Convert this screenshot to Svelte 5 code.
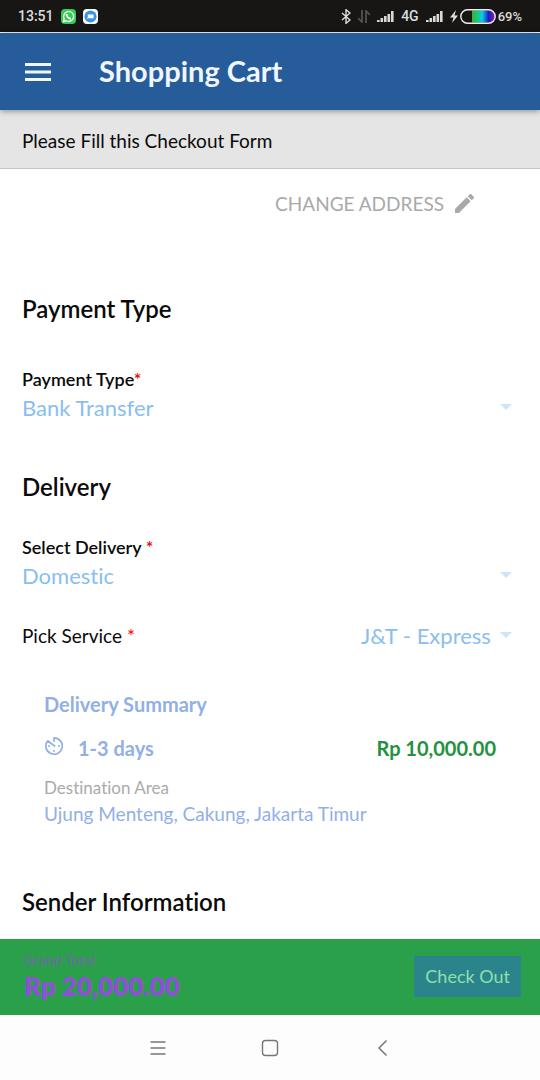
<script lang="ts">
	let payment = $state('Bank Transfer');
	let delivery = $state('Domestic');
	let service = $state('J&T - Express');

	const bars = [2, 4, 6, 8, 11];
</script>

{#snippet signal()}
	<svg viewBox="0 0 17 12" width="17" height="12" aria-hidden="true">
		{#each bars as height, i}
			<rect x={i * 3.5} y={12 - height} width="2.6" {height} fill="#d8d8d8" />
		{/each}
	</svg>
{/snippet}

{#snippet caret()}
	<svg class="caret" viewBox="0 0 12 6" width="12" height="6" aria-hidden="true">
		<path d="M0 0h12L6 6z" fill="#cfe4f7" />
	</svg>
{/snippet}

<div class="screen">
	<div class="status">
		<div class="status__group">
			<span>13:51</span>
			<svg viewBox="0 0 15 15" width="15" height="15" aria-hidden="true">
				<rect width="15" height="15" rx="4" fill="#35cc55" />
				<path
					d="M2.4 12.7l.9-2.8a5 5 0 1 1 1.9 1.9z"
					fill="none"
					stroke="#fff"
					stroke-width="1.3"
				/>
				<path d="M5.5 5q.2 4 4.5 4.8" fill="none" stroke="#fff" stroke-width="1.7" />
			</svg>
			<svg viewBox="0 0 15 15" width="15" height="15" aria-hidden="true">
				<rect width="15" height="15" rx="4" fill="#fff" />
				<circle cx="7.5" cy="7.5" r="6.1" fill="#3b93e4" />
				<path d="M4.8 5.6h5.8v3.6H5.400l-1.400.8.8-2z" fill="#fff" />
			</svg>
		</div>
		<div class="status__group">
			<svg viewBox="0 0 10 15" width="10" height="15" aria-hidden="true">
				<path d="M1 4l8 7-4 3.3V.7L9 4l-8 7" fill="none" stroke="#ddd" stroke-width="1.4" />
			</svg>
			<svg viewBox="0 0 12 13" width="12" height="13" aria-hidden="true">
				<path d="M4 0v12L0 8M8 13V1l4 4" fill="none" stroke="#555" stroke-width="1.7" />
			</svg>
			{@render signal()}
			<span>4G</span>
			{@render signal()}
			<div class="battery">
				<svg viewBox="0 0 8 13" width="8" height="13" aria-hidden="true">
					<path d="M6 0L0 7.5h3.5L2 13l6-7.5H4.5z" fill="#ddd" />
				</svg>
				<svg viewBox="0 0 36 15" width="36" height="15" aria-hidden="true">
					<defs>
						<linearGradient id="charge">
							<stop offset="0" stop-color="#3fae32" />
							<stop offset=".25" stop-color="#12cd7c" />
							<stop offset=".45" stop-color="#12c6ef" />
							<stop offset=".72" stop-color="#1420b5" />
							<stop offset="1" stop-color="#a312b8" />
						</linearGradient>
					</defs>
					<path d="M12 1.5h17a6 6 0 0 1 0 12H12z" fill="url(#charge)" />
					<rect x=".8" y=".8" width="34.4" height="13.4" rx="6.7" fill="none" stroke="#eee" stroke-width="1.4" />
				</svg>
				<span>69%</span>
			</div>
		</div>
	</div>

	<header class="toolbar">
		<button class="toolbar__menu" type="button" aria-label="Menu">
			<svg viewBox="0 0 26 18" width="26" height="18" aria-hidden="true">
				<path d="M0 1.5h26M0 9h26M0 16.5h26" stroke="#f0f6ff" stroke-width="2.8" />
			</svg>
		</button>
		<h1>Shopping Cart</h1>
	</header>

	<p class="notice">Please Fill this Checkout Form</p>

	<main>
		<div class="address">
			<button type="button">
				CHANGE ADDRESS
				<svg viewBox="3 3 18 18" width="19" height="19" aria-hidden="true">
					<path
						d="M3 17.25V21h3.75L17.81 9.94l-3.75-3.75L3 17.25zM20.71 7.04a1 1 0 0 0 0-1.41l-2.34-2.34a1 1 0 0 0-1.41 0l-1.83 1.83 3.75 3.75 1.83-1.83z"
						fill="#a9a9a9"
					/>
				</svg>
			</button>
		</div>

		<section>
			<h2>Payment Type</h2>
			<div class="field">
				<label for="payment">Payment Type<b>*</b></label>
				<div class="select">
					<select id="payment" bind:value={payment}>
						<option>Bank Transfer</option>
					</select>
					{@render caret()}
				</div>
			</div>
		</section>

		<section>
			<h2>Delivery</h2>
			<div class="field">
				<label for="delivery">Select Delivery <b>*</b></label>
				<div class="select">
					<select id="delivery" bind:value={delivery}>
						<option>Domestic</option>
					</select>
					{@render caret()}
				</div>
			</div>
			<div class="service">
				<label for="service">Pick Service <b>*</b></label>
				<div class="select">
					<select id="service" bind:value={service}>
						<option>J&T - Express</option>
					</select>
					{@render caret()}
				</div>
			</div>

			<div class="summary">
				<h3>Delivery Summary</h3>
				<div class="summary__row">
					<svg viewBox="0 0 20 20" width="20" height="20" aria-hidden="true">
						<path
							d="M10 5.2V1.8a8.2 8.2 0 1 1-6.3 3L10.6 10"
							fill="none"
							stroke="#92b0e6"
							stroke-width="1.7"
							stroke-linecap="round"
							stroke-linejoin="round"
						/>
						<circle cx="5" cy="10" r="1" fill="#92b0e6" />
						<circle cx="10" cy="15" r="1" fill="#92b0e6" />
						<circle cx="15" cy="10" r="1" fill="#92b0e6" />
					</svg>
					<span class="summary__days">1-3 days</span>
					<span class="summary__price">Rp 10,000.00</span>
				</div>
				<p class="summary__label">Destination Area</p>
				<p class="summary__area">Ujung Menteng, Cakung, Jakarta Timur</p>
			</div>
		</section>

		<section>
			<h2>Sender Information</h2>
		</section>
	</main>

	<div class="bottom">
		<footer class="total">
			<div>
				<p class="total__label">Grand Total</p>
				<p class="total__amount">Rp 20,000.00</p>
			</div>
			<button type="button">Check Out</button>
		</footer>
		<nav class="keys" aria-label="System">
			<button type="button" aria-label="Recent apps">
				<svg viewBox="0 0 18 18" width="18" height="18" aria-hidden="true">
					<path d="M1.5 3h15M1.5 9h15M1.5 15h15" stroke="#777" stroke-width="1.5" />
				</svg>
			</button>
			<button type="button" aria-label="Home">
				<svg viewBox="0 0 18 18" width="18" height="18" aria-hidden="true">
					<rect x="1.5" y="1.5" width="15" height="15" rx="3" fill="none" stroke="#777" stroke-width="1.4" />
				</svg>
			</button>
			<button type="button" aria-label="Back">
				<svg viewBox="0 0 18 18" width="18" height="18" aria-hidden="true">
					<path d="M13.500 1.500L6 9l7.500 7.500" fill="none" stroke="#777" stroke-width="1.5" />
				</svg>
			</button>
		</nav>
	</div>
</div>

<style>
	:global(body) {
		background: #fff;
	}

	.screen {
		display: flex;
		min-height: 100vh;
		flex-direction: column;
		color: #0a0a0a;
		font-family: Lato, 'Open Sans', sans-serif;
		font-variant-ligatures: none;
	}

	h1,
	h2,
	h3,
	p {
		margin: 0;
	}

	svg {
		display: block;
		flex: none;
	}

	button,
	select {
		padding: 0;
		border: 0;
		background: transparent;
		color: inherit;
		font: inherit;
	}

	.status {
		display: flex;
		height: 32px;
		align-items: center;
		justify-content: space-between;
		border-bottom: 1px solid #fff;
		background: #171614;
		color: #ddd;
		font-family: Roboto, sans-serif;
		font-size: 14px;
		font-weight: 500;
		padding: 0 18px;
	}

	.status__group {
		display: flex;
		align-items: center;
		gap: 7px;
	}

	.battery {
		display: flex;
		align-items: center;
		gap: 2px;
		font-size: 13px;
	}

	.toolbar {
		display: flex;
		height: 77px;
		align-items: center;
		gap: 48px;
		background: #275c9a;
		box-shadow: 0 1px 6px rgb(0 0 0 / 40%);
		color: #f0f6ff;
		padding: 0 25px;
		z-index: 1;
	}

	h1 {
		font-size: 29px;
		font-weight: 700;
		line-height: 32px;
		padding-bottom: 2px;
	}

	.notice {
		border-bottom: 1px solid #c6c6c6;
		background: #e5e5e5;
		font-size: 19px;
		line-height: 24px;
		padding: 19px 22px 15px;
	}

	main {
		flex: 1;
		padding: 0 28px 21px 22px;
	}

	.address {
		display: flex;
		height: 68px;
		align-items: center;
		justify-content: flex-end;
		padding-right: 38px;
	}

	.address button {
		display: flex;
		align-items: center;
		gap: 11px;
		color: #a9a9a9;
		font-size: 19px;
	}

	section {
		padding-top: 48px;
	}

	.address + section {
		padding-top: 56px;
	}

	h2 {
		font-size: 24px;
		font-weight: 600;
		line-height: 32px;
	}

	.field {
		padding-top: 32px;
	}

	.address + section .field {
		padding-top: 42px;
	}

	.field label {
		display: block;
		font-size: 18px;
		font-weight: 600;
		line-height: 24px;
	}

	label b {
		color: #f00;
		font-weight: inherit;
	}

	.select {
		display: grid;
		align-items: center;
	}

	select {
		height: 32px;
		appearance: none;
		color: #8abef0;
		font-size: 22px;
		grid-area: 1 / 1;
		padding-right: 20px;
	}

	.caret {
		grid-area: 1 / 1;
		justify-self: end;
		pointer-events: none;
	}

	.service {
		display: flex;
		align-items: center;
		justify-content: space-between;
		font-size: 19px;
		padding-top: 28px;
	}

	.summary {
		color: #92b0e6;
		font-size: 20px;
		line-height: 24px;
		padding: 41px 16px 12px 22px;
	}

	h3 {
		font-size: 20px;
		font-weight: 700;
	}

	.summary__row {
		display: flex;
		align-items: flex-start;
		gap: 14px;
		padding: 20px 0 16px;
	}

	.summary__days {
		flex: 1;
		font-weight: 700;
	}

	.summary__price {
		color: #23923f;
		font-weight: 700;
	}

	.summary__label {
		color: #aaa;
		font-size: 17px;
		padding-bottom: 2px;
	}

	.summary__area {
		font-size: 19px;
	}

	.bottom {
		position: sticky;
		bottom: 0;
	}

	.total {
		display: flex;
		box-sizing: border-box;
		height: 76px;
		align-items: center;
		justify-content: space-between;
		background: #2aa04a;
		padding: 0 19px 2px 24px;
	}

	.total__label {
		color: #6e6aa2;
		font-size: 14px;
		font-weight: 600;
		line-height: 20px;
	}

	.total__amount {
		color: #8f50d8;
		font-size: 26px;
		font-weight: 800;
		line-height: 32px;
	}

	.total button {
		height: 41px;
		background: #2b838b;
		color: #8be0ac;
		font-size: 18px;
		padding: 0 11px;
	}

	.keys {
		display: flex;
		height: 65px;
		align-items: center;
		justify-content: center;
		gap: 94px;
		background: #fdfdfd;
	}
</style>
